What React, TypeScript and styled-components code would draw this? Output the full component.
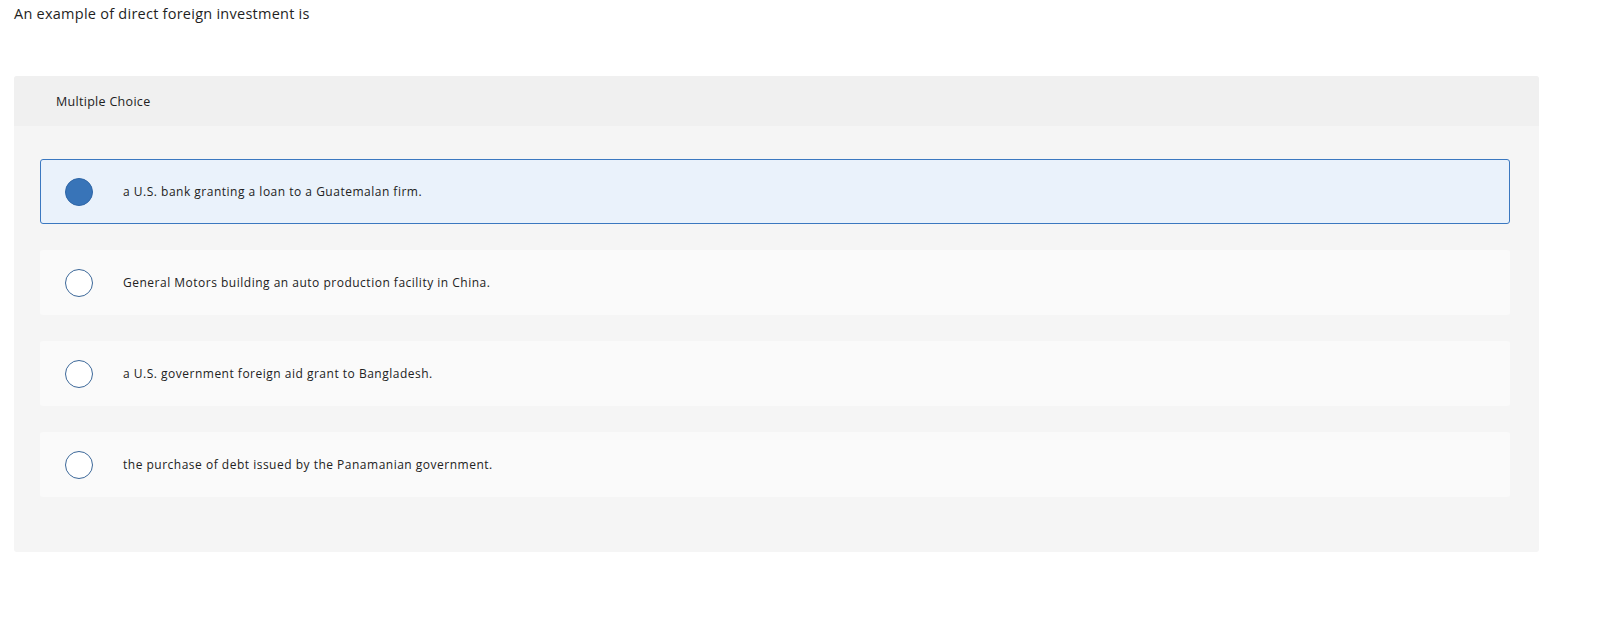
import React from "react";
import { styled, createGlobalStyle } from "styled-components";

const GlobalStyle = createGlobalStyle`
  body {
    margin: 0;
    background: #fff;
    font-family: "Open Sans", Lato, Arial, sans-serif;
    color: #222;
  }
`;

const choices = [
  "a U.S. bank granting a loan to a Guatemalan firm.",
  "General Motors building an auto production facility in China.",
  "a U.S. government foreign aid grant to Bangladesh.",
  "the purchase of debt issued by the Panamanian government.",
];

const App = () => {
  const selected = 0;
  return (
    <St.Page>
      <GlobalStyle />
      <St.Question>An example of direct foreign investment is</St.Question>
      <St.Panel>
        <St.Header>Multiple Choice</St.Header>
        <St.Options>
          {choices.map((text, i) => (
            <St.Option key={i} $active={i === selected}>
              <St.Radio $active={i === selected} />
              <St.Label>{text}</St.Label>
            </St.Option>
          ))}
        </St.Options>
      </St.Panel>
    </St.Page>
  );
};

export default App;

const St = {
  Page: styled.div`
    padding: 0 14px;
  `,
  Question: styled.div`
    padding-top: 4px;
    font-size: 14.5px;
    line-height: 20px;
    letter-spacing: 0.25px;
    color: #1f1f1f;
  `,
  Panel: styled.div`
    margin-top: 52px;
    width: 1525px;
    border-radius: 3px;
    overflow: hidden;
    background: #f5f5f5;
  `,
  Header: styled.div`
    height: 50px;
    display: flex;
    align-items: center;
    padding-left: 42px;
    background: #f0f0f0;
    font-size: 12.5px;
    letter-spacing: 0.3px;
    color: #222;
  `,
  Options: styled.div`
    display: flex;
    flex-direction: column;
    gap: 26px;
    padding: 33px 29px 55px 26px;
  `,
  Option: styled.div<{ $active: boolean }>`
    box-sizing: border-box;
    height: 65px;
    display: flex;
    align-items: center;
    gap: 30px;
    padding-left: 24px;
    border-radius: 3px;
    border: 1px solid ${(p) => (p.$active ? "#3b78c0" : "transparent")};
    background: ${(p) => (p.$active ? "#eaf2fb" : "#fafafa")};
  `,
  Radio: styled.span<{ $active: boolean }>`
    box-sizing: border-box;
    width: 28px;
    height: 28px;
    flex: none;
    border-radius: 50%;
    border: 1.5px solid ${(p) => (p.$active ? "#2f66a6" : "#3c6899")};
    background: ${(p) => (p.$active ? "#3874b8" : "#fff")};
  `,
  Label: styled.span`
    font-size: 12px;
    letter-spacing: 0.5px;
    color: #222;
  `,
};
